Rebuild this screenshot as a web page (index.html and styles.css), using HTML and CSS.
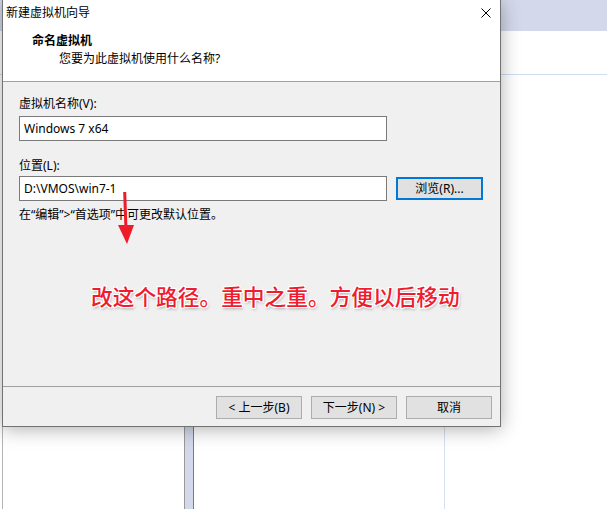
FILE: index.html
```html
<!DOCTYPE html>
<html lang="zh-CN">
<head>
<meta charset="utf-8">
<title>新建虚拟机向导</title>
<link rel="stylesheet" href="styles.css">
</head>
<body>
<div class="screen">
  <div class="bg">
    <div class="bg-band"></div>
    <div class="bg-rule"></div>
    <div class="bg-cols">
      <div class="bg-pane-left"></div>
      <div class="bg-split"></div>
      <div class="bg-pane-mid"></div>
    </div>
  </div>

  <div class="dialog">
    <div class="titlebar">
      <span class="title">新建虚拟机向导</span>
      <svg class="close" width="10" height="10" viewBox="0 0 10 10"><path d="M0.5 0.5 L9.5 9.5 M9.5 0.5 L0.5 9.5" stroke="#000" stroke-width="1" fill="none"/></svg>
    </div>
    <div class="header">
      <div class="h-title">命名虚拟机</div>
      <div class="h-sub">您要为此虚拟机使用什么名称?</div>
    </div>
    <div class="body">
      <div class="field-label">虚拟机名称(V):</div>
      <div class="input">Windows 7 x64</div>
      <div class="field-label second">位置(L):</div>
      <div class="row">
        <div class="input">D:\VMOS\win7-1</div>
        <div class="btn focused">浏览(R)...</div>
      </div>
      <div class="hint">在“编辑”&gt;“首选项”中可更改默认位置。</div>
    </div>
    <div class="footer">
      <div class="btn">&lt; 上一步(B)</div>
      <div class="btn">下一步(N) &gt;</div>
      <div class="btn">取消</div>
    </div>
  </div>

  <svg class="arrow" width="20" height="56" viewBox="0 0 20 56">
    <path d="M5.2 0 L8.2 0 L9.4 35 L6.4 35 Z" fill="#ee1c2a"/>
    <path d="M0 33 L16 33 L9 52 Z" fill="#ee1c2a"/>
  </svg>
  <div class="note">改这个路径。重中之重。方便以后移动</div>
</div>
</body>
</html>
```

FILE: styles.css
```css
html, body {
  margin: 0;
  padding: 0;
  background: #fff;
}

.screen {
  position: relative;
  width: 607px;
  height: 509px;
  overflow: hidden;
  background: #fff;
  font-family: "Noto Sans", "Noto Sans CJK SC", sans-serif;
  font-size: 12px;
  color: #000;
}

/* background application */
.bg {
  display: flex;
  flex-direction: column;
  height: 509px;
}
.bg-band {
  height: 31px;
  background: #d3d9eb;
}
.bg-rule {
  margin-top: 43px;
  height: 1px;
  background: #cfdcf1;
}
.bg-cols {
  flex: 1;
  display: flex;
}
.bg-pane-left {
  margin-left: 2px;
  width: 181px;
  border-left: 1px solid #b4b4b4;
}
.bg-split {
  width: 8px;
  background: #d3d9eb;
  border-left: 1px solid #9a9a9a;
  border-right: 1px solid #7c7c7c;
}
.bg-pane-mid {
  width: 250px;
  border-right: 1px solid #d3e0f2;
}

/* dialog window */
.dialog {
  position: absolute;
  left: 2px;
  top: 0;
  width: 497px;
  height: 426px;
  border: 1px solid #727272;
  border-top: 0;
  background: #f0f0f0;
  display: flex;
  flex-direction: column;
  box-shadow: 0 2px 18px rgba(0, 0, 0, 0.32);
}

.titlebar {
  height: 25px;
  background: #fff;
  display: flex;
  align-items: center;
  padding-left: 3px;
  padding-right: 9px;
}
.title {
  flex: 1;
  line-height: 16px;
}
.close {
  display: block;
}

.header {
  height: 43px;
  padding-top: 7px;
  padding-bottom: 6px;
  background: #fff;
  border-bottom: 1px solid #a0a0a0;
}
.h-title {
  padding-left: 29px;
  line-height: 18px;
  font-weight: bold;
}
.h-sub {
  padding-left: 56px;
  line-height: 18px;
}

.body {
  height: 290px;
  padding: 14px 0 0 16px;
  background: #f0f0f0;
}
.field-label {
  line-height: 16px;
  margin-bottom: 4px;
}
.field-label.second {
  margin-top: 17px;
  margin-bottom: 2px;
}
.input {
  box-sizing: border-box;
  width: 368px;
  height: 25px;
  border: 1px solid #7a7a7a;
  background: #fff;
  padding-left: 4px;
  line-height: 23px;
}
.row {
  display: flex;
  align-items: center;
  gap: 9px;
}
.hint {
  margin-top: 6px;
  line-height: 16px;
}

.btn {
  box-sizing: border-box;
  width: 86px;
  height: 23px;
  border: 1px solid #adadad;
  background: #e1e1e1;
  text-align: center;
  line-height: 21px;
}
.btn.focused {
  width: 87px;
  border: 2px solid #0078d7;
  line-height: 19px;
}

.footer {
  box-sizing: border-box;
  height: 40px;
  border-top: 1px solid #a0a0a0;
  padding: 9px 8px 0 0;
  display: flex;
  justify-content: flex-end;
  gap: 9px;
}

/* annotations */
.arrow {
  position: absolute;
  left: 118px;
  top: 192px;
}
.note {
  position: absolute;
  left: 91px;
  top: 285px;
  font-family: "Noto Sans CJK SC", sans-serif;
  font-size: 21.7px;
  font-weight: 500;
  line-height: 1;
  color: #ee1c2e;
  white-space: nowrap;
  text-shadow:
    1px 0 0 #fff, -1px 0 0 #fff, 0 1px 0 #fff, 0 -1px 0 #fff,
    1px 1px 0 #fff, -1px -1px 0 #fff, 1px -1px 0 #fff, -1px 1px 0 #fff,
    1px 2px 3px rgba(0, 0, 0, 0.3);
}
```
